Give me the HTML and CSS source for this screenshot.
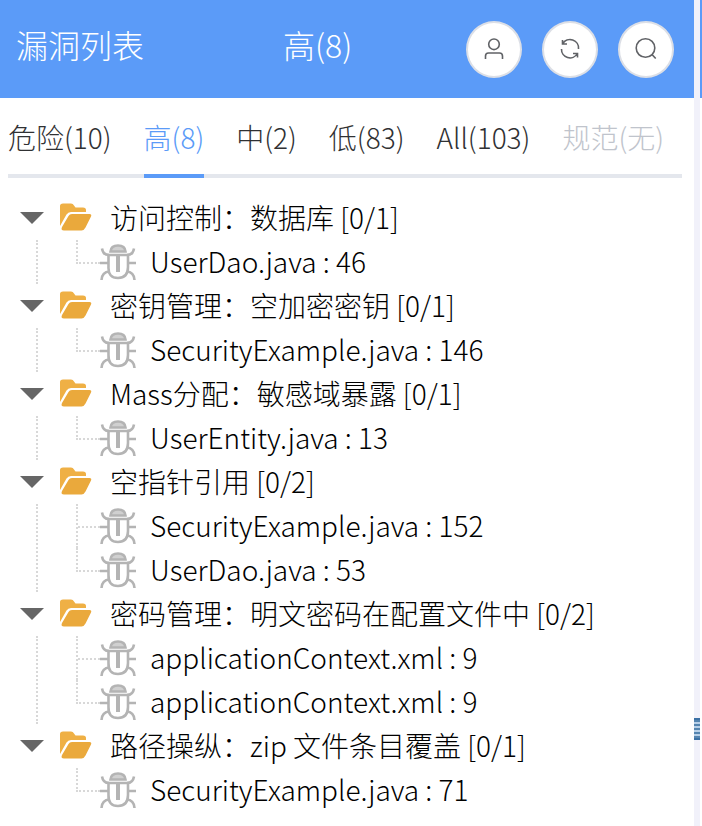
FILE: index.html
```html
<!DOCTYPE html>
<html lang="zh-CN">
<head>
<meta charset="utf-8">
<title>漏洞列表</title>
<link rel="stylesheet" href="styles.css">
</head>
<body>
<svg class="defs" aria-hidden="true">
  <symbol id="folder" viewBox="0 0 32 28">
    <path d="M0 25V3Q0 0.500 3 0.500H11Q13 0.500 14 2.500L15.500 4.500H23Q26 4.500 26 7V9H11Q8 9 6.500 11.500L0 23Z" fill="#efb045"/>
    <path d="M2 24 8.500 13Q9.500 11 12 11H29.500Q32 11 31 13.500L25.500 24.500Q24 27.500 21.500 27.500H4Q0.500 27.500 2 24Z" fill="#eaa93c"/>
  </symbol>
  <symbol id="bug" viewBox="0 0 36 36">
    <g fill="none" stroke="#b4b4b4" stroke-width="2.600">
      <path d="M10.500 7.500Q11 1.500 18 1.500T25.500 7.500Z" fill="#d0d0d0"/>
      <path d="M8.500 11H28V23Q28 34 18 34T8.500 23Z"/>
      <path d="M18 12V28" stroke-width="4"/>
      <path d="M2 4.500Q3 11 9 11M34 4.500Q33 11 27 11M0 19H8M28 19H36M1.500 36Q2 28 9.500 27.500M34.500 36Q34 28 26.500 27.500"/>
    </g>
  </symbol>
</svg>
<div class="app">
  <main class="panel">
    <header class="header">
      <h1 class="title">漏洞列表</h1>
      <span class="level">高(8)</span>
      <div class="actions">
        <button class="round" aria-label="用户"><svg width="24" height="24" viewBox="0 0 24 24"><circle cx="12" cy="7.300" r="5.300"/><path d="M3.500 22V19Q3.500 16 6.500 16H17.500Q20.500 16 20.500 19V22"/></svg></button>
        <button class="round" aria-label="刷新"><svg width="24" height="24" viewBox="0 0 24 24"><path d="M4.500 3V7H9M4.700 6.800A8.500 8.500 0 0 1 20.500 12M19.500 20.500V16.500H15M19.300 16.700A8.500 8.500 0 0 1 3.500 12"/></svg></button>
        <button class="round" aria-label="搜索"><svg width="24" height="24" viewBox="0 0 24 24"><circle cx="11.500" cy="11" r="9.300"/><path d="M18 17.500 21.700 21.500"/></svg></button>
      </div>
    </header>
    <nav class="tabs">
      <a class="tab">危险(10)</a>
      <a class="tab active">高(8)</a>
      <a class="tab">中(2)</a>
      <a class="tab">低(83)</a>
      <a class="tab">All(103)</a>
      <a class="tab disabled">规范(无)</a>
    </nav>
    <ul class="tree">
      <li class="group">
        <div class="parent"><i class="arrow"></i><svg class="folder"><use href="#folder"/></svg><span class="label">访问控制：数据库 [0/1]</span></div>
        <ul class="children">
          <li class="leaf"><i class="branch"></i><svg class="bug"><use href="#bug"/></svg><span class="label">UserDao.java : 46</span></li>
        </ul>
      </li>
      <li class="group">
        <div class="parent"><i class="arrow"></i><svg class="folder"><use href="#folder"/></svg><span class="label">密钥管理：空加密密钥 [0/1]</span></div>
        <ul class="children">
          <li class="leaf"><i class="branch"></i><svg class="bug"><use href="#bug"/></svg><span class="label">SecurityExample.java : 146</span></li>
        </ul>
      </li>
      <li class="group">
        <div class="parent"><i class="arrow"></i><svg class="folder"><use href="#folder"/></svg><span class="label">Mass分配：敏感域暴露 [0/1]</span></div>
        <ul class="children">
          <li class="leaf"><i class="branch"></i><svg class="bug"><use href="#bug"/></svg><span class="label">UserEntity.java : 13</span></li>
        </ul>
      </li>
      <li class="group">
        <div class="parent"><i class="arrow"></i><svg class="folder"><use href="#folder"/></svg><span class="label">空指针引用 [0/2]</span></div>
        <ul class="children">
          <li class="leaf"><i class="branch"></i><svg class="bug"><use href="#bug"/></svg><span class="label">SecurityExample.java : 152</span></li>
          <li class="leaf"><i class="branch"></i><svg class="bug"><use href="#bug"/></svg><span class="label">UserDao.java : 53</span></li>
        </ul>
      </li>
      <li class="group">
        <div class="parent"><i class="arrow"></i><svg class="folder"><use href="#folder"/></svg><span class="label">密码管理：明文密码在配置文件中 [0/2]</span></div>
        <ul class="children">
          <li class="leaf"><i class="branch"></i><svg class="bug"><use href="#bug"/></svg><span class="label">applicationContext.xml : 9</span></li>
          <li class="leaf"><i class="branch"></i><svg class="bug"><use href="#bug"/></svg><span class="label">applicationContext.xml : 9</span></li>
        </ul>
      </li>
      <li class="group">
        <div class="parent"><i class="arrow"></i><svg class="folder"><use href="#folder"/></svg><span class="label">路径操纵：zip 文件条目覆盖 [0/1]</span></div>
        <ul class="children">
          <li class="leaf"><i class="branch"></i><svg class="bug"><use href="#bug"/></svg><span class="label">SecurityExample.java : 71</span></li>
        </ul>
      </li>
    </ul>
  </main>
  <div class="splitter"><i class="grip"></i></div>
  <div class="next"></div>
</div>
</body>
</html>
```
FILE: styles.css
```css
* { box-sizing: border-box; }
body {
  margin: 0;
  background: #fff;
  color: #000;
  font: 300 28px/44px "Noto Sans CJK SC", sans-serif;
}
ul { list-style: none; margin: 0; padding: 0; }
.defs { display: none; }
.app { display: flex; width: 702px; height: 826px; overflow: hidden; }
.panel { width: 694px; }
.header {
  height: 98px;
  background: #5b9bf8;
  color: #fff;
  display: flex;
  align-items: center;
  padding: 0 20px 0 16px;
  font-size: 32px;
}
.title { font: inherit; margin: 0; width: 267px; padding-bottom: 10px; }
.level { padding-bottom: 10px; }
.actions { display: flex; gap: 20px; margin-left: auto; }
.round {
  width: 56px;
  height: 57px;
  padding: 0;
  border: 2px solid #dcdfe6;
  border-radius: 50%;
  background: #fff;
  display: flex;
  align-items: center;
  justify-content: center;
}
.round svg { fill: none; stroke: #606266; stroke-width: 1.6; }
.tabs {
  display: flex;
  gap: 32px;
  height: 80px;
  margin: 0 12px 0 8px;
  border-bottom: 4px solid #e4e7ed;
  color: #303133;
  white-space: nowrap;
}
.tab { height: 80px; line-height: 78px; }
.active { color: #5b9bf8; border-bottom: 4px solid #5b9bf8; }
.disabled { color: #c0c4cc; }
.tree { padding-top: 18px; white-space: nowrap; }
.label { padding-bottom: 2px; }
.parent { display: flex; align-items: center; height: 44px; padding-left: 20px; }
.arrow {
  border: 12px solid transparent;
  border-top-color: #666;
  border-bottom: 0;
}
.folder { width: 32px; height: 28px; margin: 0 18px 2px 16px; }
.children { margin-left: 36px; border-left: 2px dotted #d8d8d8; }
.leaf { display: flex; height: 44px; align-items: center; padding-left: 38px; }
.branch {
  width: 24px;
  height: 24px;
  align-self: flex-start;
  border-left: 2px dotted #d8d8d8;
  border-bottom: 2px dotted #d8d8d8;
}
.leaf:not(:last-child) .branch {
  height: 44px;
  border-bottom: 0;
  background: repeating-linear-gradient(90deg, #d8d8d8 0 2px, transparent 2px 4px) 0 22px / 100% 2px no-repeat;
}
.group:last-child .children { border-color: transparent; }
.bug { width: 36px; height: 36px; margin-right: 14px; }
.splitter { width: 6px; background: #f1f1fa; display: flex; padding-top: 718px; }
.grip {
  width: 6px;
  height: 22px;
  background: repeating-linear-gradient(#5585b0 0 2px, #b8d0e8 2px 4px);
  border-bottom: 2px solid #3a70a5;
  border-top: 2px solid #3a70a5;
}
.next { width: 2px; height: 98px; background: #5b9bf8; }
```
